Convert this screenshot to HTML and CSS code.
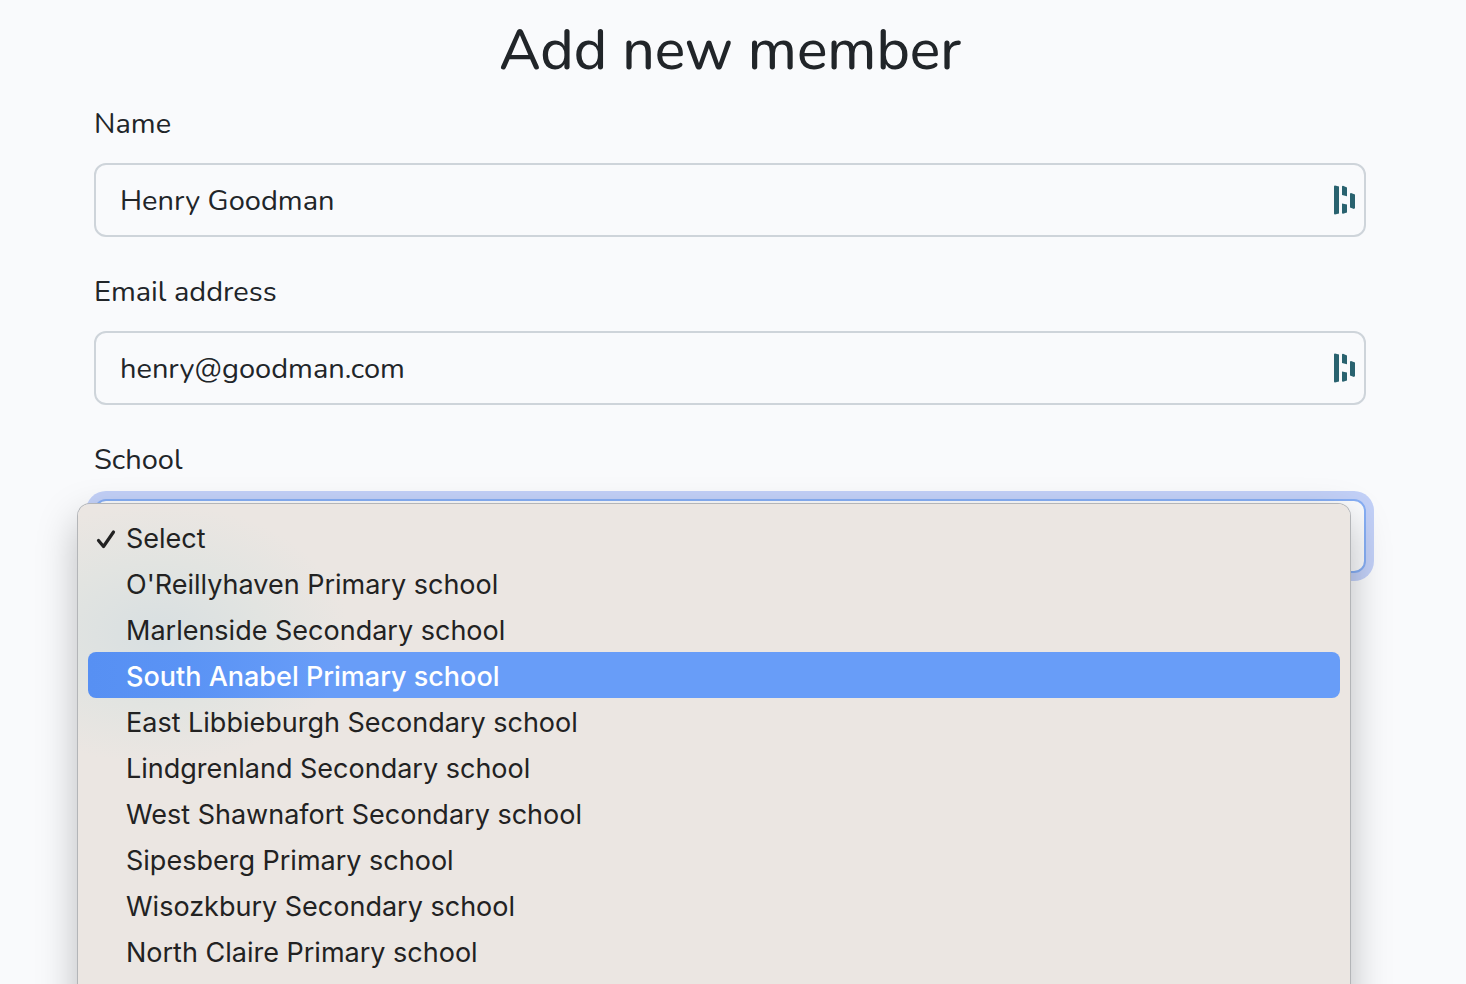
FILE: index.html
```
<!DOCTYPE html>
<html lang="en">
<head>
<meta charset="utf-8">
<meta name="viewport" content="width=device-width, initial-scale=1">
<title>Add new member</title>
<link rel="stylesheet" href="styles.css">
</head>
<body>
<main class="page">
  <h1 class="title">Add new member</h1>
  <form class="form">
    <div class="field">
      <label class="label" for="name">Name</label>
      <div class="control">
        <input class="input" id="name" type="text" value="Henry Goodman">
        <svg class="vault-icon" viewBox="0 0 22 30" aria-hidden="true">
          <path d="M0 1.500Q0 .5 1 .5L5 1.500V28.500L1 29.500Q0 29.500 0 28.500ZM8 1.500Q8 .8 9 .8L13 2.500V11.300L8 10ZM8 18.500L13 19.500V27.500L9 28.800Q8 28.800 8 28ZM16 9Q16 8 17 8L21 9.500V23L20 24L16 22.500Z"/>
        </svg>
      </div>
    </div>
    <div class="field">
      <label class="label" for="email">Email address</label>
      <div class="control">
        <input class="input" id="email" type="email" value="henry@goodman.com">
        <svg class="vault-icon" viewBox="0 0 22 30" aria-hidden="true">
          <path d="M0 1.500Q0 .5 1 .5L5 1.500V28.500L1 29.500Q0 29.500 0 28.500ZM8 1.500Q8 .8 9 .8L13 2.500V11.300L8 10ZM8 18.500L13 19.500V27.500L9 28.800Q8 28.800 8 28ZM16 9Q16 8 17 8L21 9.500V23L20 24L16 22.500Z"/>
        </svg>
      </div>
    </div>
    <div class="field">
      <label class="label" for="school">School</label>
      <div class="control">
        <select class="input select-open" id="school"><option>Select</option></select>
        <div class="menu" role="listbox" aria-label="School">
          <button type="button" class="option" role="option" aria-selected="true">
            <svg class="check" viewBox="0 0 20 20" aria-hidden="true"><path d="M2.500 11.500L7.500 17.500L17.500 3"/></svg>Select</button>
          <button type="button" class="option" role="option">O'Reillyhaven Primary school</button>
          <button type="button" class="option" role="option">Marlenside Secondary school</button>
          <button type="button" class="option option-active" role="option">South Anabel Primary school</button>
          <button type="button" class="option" role="option">East Libbieburgh Secondary school</button>
          <button type="button" class="option" role="option">Lindgrenland Secondary school</button>
          <button type="button" class="option" role="option">West Shawnafort Secondary school</button>
          <button type="button" class="option" role="option">Sipesberg Primary school</button>
          <button type="button" class="option" role="option">Wisozkbury Secondary school</button>
          <button type="button" class="option" role="option">North Claire Primary school</button>
        </div>
      </div>
    </div>
  </form>
</main>
</body>
</html>
```
FILE: styles.css
```
* { box-sizing: border-box; }

body {
  margin: 0;
  background: #f9fafc;
  color: #212529;
  font-family: Nunito, "Noto Sans", sans-serif;
  font-size: 29px;
}

.page {
  min-height: 100vh;
  padding: 16px 100px 0 94px;
  overflow: hidden;
}

.title {
  margin: 0 0 16px;
  font-size: 57px;
  font-weight: 500;
  line-height: 69px;
  text-align: center;
}

.form {
  display: flex;
  flex-direction: column;
  gap: 32px;
}

.field {
  display: flex;
  flex-direction: column;
  gap: 16px;
}

.label { line-height: 46px; }

.control { position: relative; }

.input {
  display: block;
  width: 100%;
  height: 74px;
  padding: 0 60px 0 24px;
  border: 2px solid #ced4da;
  border-radius: 12px;
  background: #f9fafc;
  color: inherit;
  font: inherit;
  outline: none;
}

.vault-icon {
  position: absolute;
  top: 22px;
  right: 10px;
  width: 22px;
  height: 30px;
  fill: #29626f;
}

.select-open {
  appearance: none;
  border-color: #86aef4;
  box-shadow: 0 0 0 8px #c2d0f7;
}

.menu {
  position: absolute;
  top: 5px;
  left: -16px;
  right: 16px;
  padding: 10px 10px 48px;
  border-radius: 12px;
  background: radial-gradient(ellipse 190px 130px at 80px 130px, #d8dfe1, #e2e4e1 55%, #ebe6e2);
  box-shadow: 0 0 0 1px #b3b5b8, 0 16px 40px rgba(0, 0, 0, 0.26);
  font-family: Inter, sans-serif;
}

.option {
  position: relative;
  display: block;
  width: 100%;
  height: 46px;
  padding: 4px 38px 0;
  border: 0;
  border-radius: 8px;
  background: none;
  color: #222;
  font: inherit;
  font-size: 27px;
  line-height: 42px;
  text-align: left;
}

.option-active {
  background: linear-gradient(90deg, #5790f3, #5a93f5 100px, #689df8 240px);
  color: #fff;
  font-weight: 500;
}

.check {
  position: absolute;
  top: 15px;
  left: 8px;
  width: 20px;
  height: 20px;
  fill: none;
  stroke: #222;
  stroke-width: 3.2;
  stroke-linecap: round;
  stroke-linejoin: round;
}
```
